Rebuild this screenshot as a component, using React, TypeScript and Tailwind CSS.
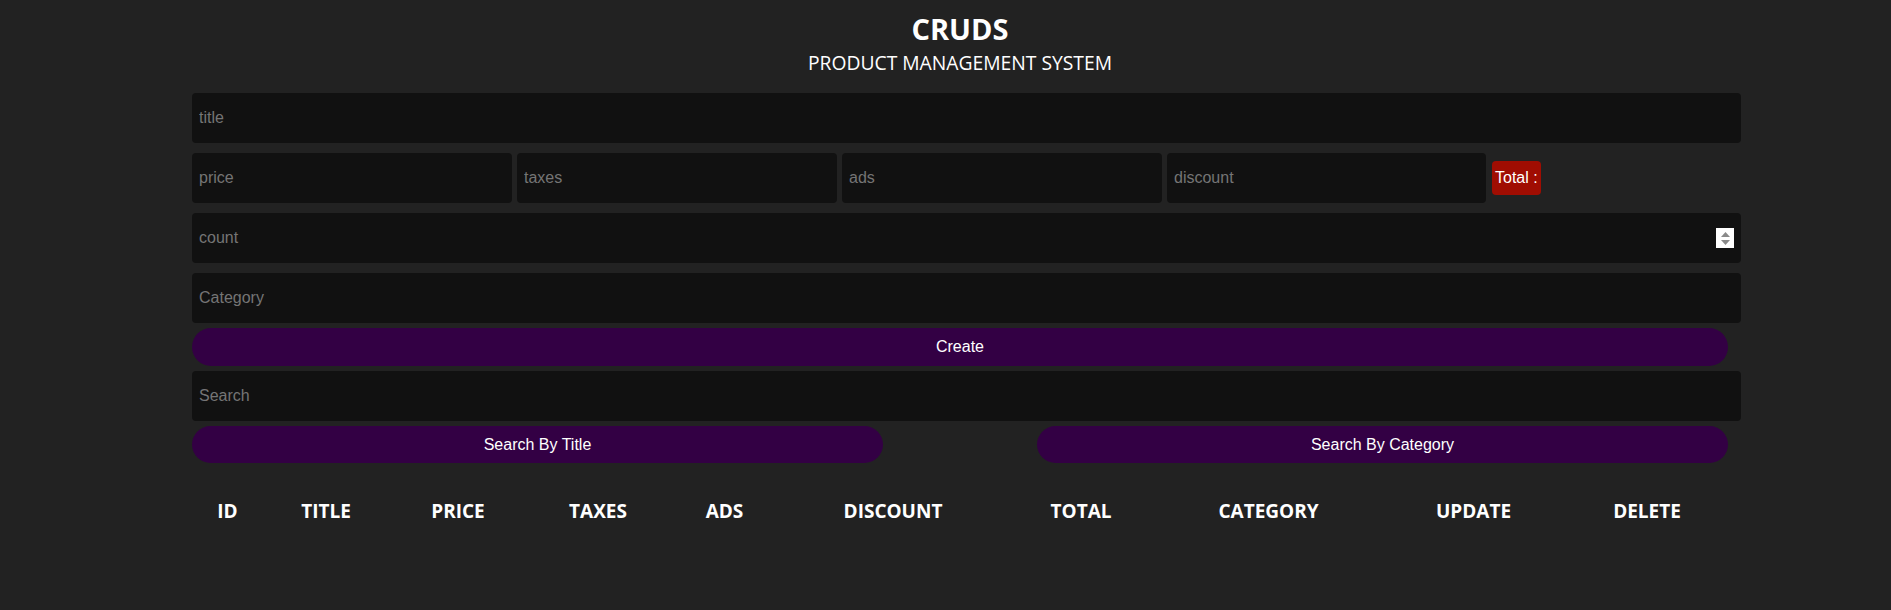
import React from 'react';

const inputCls =
  'h-[50px] rounded-[4px] bg-[#111] px-[7px] text-[16px] text-white outline-none placeholder:text-[#757575]';

const columns = [
  { label: 'ID', w: 'w-[71px]' },
  { label: 'TITLE', w: 'w-[126px]' },
  { label: 'PRICE', w: 'w-[138px]' },
  { label: 'TAXES', w: 'w-[142px]' },
  { label: 'ADS', w: 'w-[111px]' },
  { label: 'DISCOUNT', w: 'w-[226px]' },
  { label: 'TOTAL', w: 'w-[150px]' },
  { label: 'CATEGORY', w: 'w-[225px]' },
  { label: 'UPDATE', w: 'w-[185px]' },
  { label: 'DELETE', w: 'w-[162px]' },
];

const App: React.FC = () => {
  return (
    <div className="min-h-screen bg-[#222] text-white font-['Liberation_Sans',Arial,sans-serif]">
      <div className="ml-[192px] w-[1536px] pt-[11px]">
        {/* Head */}
        <div className="text-center font-['Open_Sans',sans-serif]">
          <h2 className="text-[29px] font-bold leading-[36px]">CRUDS</h2>
          <p className="mt-[4px] text-[19.3px] leading-[24px]">PRODUCT MANAGEMENT SYSTEM</p>
        </div>

        {/* Inputs */}
        <div className="mt-[18px] flex flex-col">
          <input className={`${inputCls} w-[1549px]`} placeholder="title" />

          <div className="mt-[10px] flex items-center gap-[5px]">
            <input className={`${inputCls} w-[320px]`} placeholder="price" />
            <input className={`${inputCls} w-[320px]`} placeholder="taxes" />
            <input className={`${inputCls} w-[320px]`} placeholder="ads" />
            <input className={`${inputCls} w-[319px]`} placeholder="discount" />
            <small className="ml-[1px] flex h-[34px] items-center rounded-[4px] bg-[#a00d02] px-[3px] text-[16px] text-white">
              Total :
            </small>
          </div>

          <div className="relative mt-[10px] w-[1549px]">
            <input className={`${inputCls} w-full`} placeholder="count" />
            <div className="absolute right-[7px] top-[15px] flex h-[20px] w-[18px] flex-col items-center justify-center gap-[3px] bg-white">
              <svg width="9" height="5" viewBox="0 0 9 5">
                <polygon points="4.5,0 9,5 0,5" fill="#8a8a8a" />
              </svg>
              <svg width="9" height="5" viewBox="0 0 9 5">
                <polygon points="0,0 9,0 4.5,5" fill="#8a8a8a" />
              </svg>
            </div>
          </div>

          <input className={`${inputCls} mt-[10px] w-[1549px]`} placeholder="Category" />

          <button className="mt-[5px] h-[38px] w-full rounded-full bg-[#330044] text-[16px] text-white">
            Create
          </button>
        </div>

        {/* Search */}
        <div className="mt-[5px] flex flex-col">
          <input className={`${inputCls} w-[1549px]`} placeholder="Search" />
          <div className="mt-[5px] flex justify-between">
            <button className="h-[37px] w-[691px] rounded-full bg-[#330044] text-[16px] text-white">
              Search By Title
            </button>
            <button className="h-[37px] w-[691px] rounded-full bg-[#330044] text-[16px] text-white">
              Search By Category
            </button>
          </div>
        </div>

        {/* Table */}
        <table className="mt-[20px] w-[1536px] table-fixed font-['Open_Sans',sans-serif]">
          <thead>
            <tr>
              {columns.map((c) => (
                <th key={c.label} className={`${c.w} h-[56px] text-center text-[19px] font-bold`}>
                  {c.label}
                </th>
              ))}
            </tr>
          </thead>
          <tbody></tbody>
        </table>
      </div>
    </div>
  );
};

export default App;
